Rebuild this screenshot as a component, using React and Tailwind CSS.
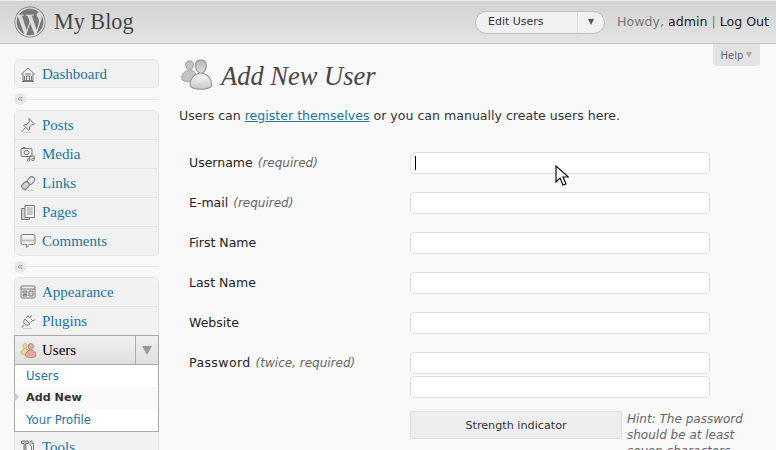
import { FaWordpress } from 'react-icons/fa';

const sans = 'font-["DejaVu_Sans",sans-serif]';
const serif = 'font-["Liberation_Serif",serif]';

function Person({ x, y, s, fill, stroke }) {
  return (
    <g transform={`translate(${x} ${y}) scale(${s})`} fill={fill} stroke={stroke} strokeWidth="1">
      <path d="M1 24c0-6 4-10 9-11-2-1-4-4-4-7 0-3 2-5 5-5s5 2 5 5c0 3-2 6-4 7 5 1 9 5 9 11 0 2-4 4-10 4S1 26 1 24z" />
    </g>
  );
}

function UsersIcon() {
  return (
    <svg width="36" height="34" viewBox="0 0 36 34" className="shrink-0">
      <defs>
        <linearGradient id="pg" x1="0" y1="0" x2="0" y2="1">
          <stop offset="0" stopColor="#b5b5b5" />
          <stop offset="0.6" stopColor="#efefef" />
          <stop offset="1" stopColor="#c8c8c8" />
        </linearGradient>
      </defs>
      <Person x={1} y={1} s={0.78} fill="#c4c4c4" stroke="#8a8a8a" />
      <Person x={9} y={0} s={1.08} fill="url(#pg)" stroke="#8f8f8f" />
    </svg>
  );
}

function UsersSmall() {
  return (
    <svg width="18" height="17" viewBox="0 0 36 34" className="shrink-0">
      <Person x={1} y={2} s={0.85} fill="#e8d98a" stroke="#8d7f4a" />
      <Person x={10} y={2} s={1.05} fill="#e3a6a6" stroke="#8e5d5d" />
    </svg>
  );
}

// hand-drawn menu glyphs, gray with a light fill like the old admin sprite
const glyphs = {
  house: (
    <>
      <path d="M1 8.500 8 2l7 6.500" />
      <path d="M3 7.500V14.500h10V7.500" fill="#e8e8e8" />
      <path d="M5 8h6M6.500 14.500V10h3v4.500M4.500 10v4M11.500 10v4M2 15.500h12" />
    </>
  ),
  pin: (
    <>
      <path d="m9 1.500 5.500 5.500-1.500 1-1-.5-2.500 2.500.2 2.300-1 1-5-5 1-1 2.300.2L9.500 4l-.5-1z" fill="#e8e8e8" />
      <path d="M5.500 10.500 1.500 15" />
      <path d="M3 15.500h8" stroke="#ccc" />
    </>
  ),
  media: (
    <>
      <rect x="1" y="2.500" width="11" height="8" rx="1" fill="#e8e8e8" />
      <circle cx="6.500" cy="6.500" r="2.200" />
      <path d="M3 2.500v-1h2v1" />
      <circle cx="8.500" cy="14" r="1.300" />
      <circle cx="13" cy="13.500" r="1.300" />
      <path d="M9.800 14V10h4.500v3.500" />
    </>
  ),
  link: (
    <>
      <path d="M7 9 4.500 11.500" strokeWidth="1" />
      <rect x="8" y="1.500" width="6" height="8" rx="3" transform="rotate(45 11 5.500)" fill="#e8e8e8" />
      <rect x="2.500" y="6.500" width="6" height="8" rx="3" transform="rotate(45 5.500 10.500)" fill="#d0d0d0" />
      <path d="M4 15.500h10" stroke="#ccc" />
    </>
  ),
  pages: (
    <>
      <path d="M1.500 4.500h8v11h-8z" fill="#cfcfcf" />
      <path d="M5 1.500h9.500v12H5z" fill="#f0f0f0" />
      <path d="M7 4h5.500M7 6h5.500M7 8h5.500M7 10h5.500" stroke="#999" />
    </>
  ),
  comment: (
    <>
      <path d="M2.500 1.500h11a1.500 1.500 0 0 1 1.500 1.500v7a1.500 1.500 0 0 1-1.500 1.500H9l-2.500 3v-3h-4A1.500 1.500 0 0 1 1 10V3a1.500 1.500 0 0 1 1.500-1.500z" fill="#f2f2f2" />
      <path d="M2 6.500h12v2H2z" fill="#bbb" stroke="none" />
    </>
  ),
  appearance: (
    <>
      <rect x="1" y="2" width="14" height="12" rx="1" fill="#f0f0f0" />
      <path d="M1 5h14" />
      <path d="M3 7h4v2H3zM3 10.500h4V12H3zM9 7h4v5H9z" fill="#d4d4d4" />
    </>
  ),
  plug: (
    <>
      <path d="m5 6 5 5c-1.500 1.500-4 1.500-5.500 0S3.500 7.500 5 6z" fill="#e8e8e8" />
      <path d="m8 3 2 2 1.500-3M11 6l2 2 2-1.500M4 12l-2.500 3" />
      <path d="M6 5 8.500 2.500M10.500 9.500 13 7" />
      <path d="M3 15.500h9" stroke="#ccc" />
    </>
  ),
  tools: (
    <>
      <path d="M1.500 2h7v2.500h-2.500v11h-2v-11h-2.500z" fill="#bbb" />
      <path d="M12 1.500v3h1.500v11h-2v-8c-1-.5-1.500-1.500-1.500-3 0-1.500.8-2.500 2-3z" fill="#e8e8e8" />
    </>
  ),
};

function Glyph({ name }) {
  return (
    <svg width="16" height="17" viewBox="0 0 16 17" fill="none" stroke="#7a7a7a" strokeWidth="1" className="mr-[6px] shrink-0">
      {glyphs[name]}
    </svg>
  );
}

function MenuRow({ icon, label, h = 'h-[29px]', last, extra = '' }) {
  return (
    <div className={`flex ${h} items-center bg-[#f1f1f1] pl-[5px] ${extra} ${last ? '' : 'border-b border-[#e3e3e3]'}`}>
      <Glyph name={icon} />
      <span className={`${serif} text-[15px] text-[#21759b]`}>{label}</span>
    </div>
  );
}

function Separator({ h }) {
  return (
    <div className={`flex ${h} items-center`}>
      <div className="flex h-[12px] w-[12px] shrink-0 items-center justify-center rounded-full bg-[#e6e6e6] text-[10px] leading-none text-[#999]">
        «
      </div>
      <div className="h-px flex-1 bg-[#e8e8e8]" />
    </div>
  );
}

function Sidebar() {
  return (
    <aside className="ml-[14px] mt-[15px] w-[145px] shrink-0">
      <div className="overflow-hidden rounded-[6px] border border-[#e3e3e3]">
        <MenuRow icon="house" label="Dashboard" h="h-[27px]" extra="pt-[1px]" last />
      </div>
      <Separator h="h-[22px]" />
      <div className="overflow-hidden rounded-[6px] border border-[#e3e3e3]">
        <MenuRow icon="pin" label="Posts" />
        <MenuRow icon="media" label="Media" />
        <MenuRow icon="link" label="Links" />
        <MenuRow icon="pages" label="Pages" />
        <MenuRow icon="comment" label="Comments" h="h-[28px]" last />
      </div>
      <Separator h="h-[21px]" />
      <div className="overflow-hidden rounded-t-[6px] border-x border-t border-[#e3e3e3]">
        <MenuRow icon="appearance" label="Appearance" />
        <MenuRow icon="plug" label="Plugins" h="h-[28px]" last />
      </div>
      <div className="border border-[#aaa]">
        <div className="flex h-[28px] items-center bg-gradient-to-b from-[#f0f0f0] to-[#dfdfdf] pl-[5px]">
          <UsersSmall />
          <span className={`${serif} ml-[4px] flex-1 text-[15px] text-black`}>Users</span>
          <div className="flex h-full w-[23px] items-center justify-center border-l border-[#aaa]">
            <div className="h-0 w-0 border-x-[5px] border-t-[9px] border-x-transparent border-t-[#999]" />
          </div>
        </div>
        <div className={`${sans} relative border-t border-[#aaa] bg-white text-[11.700px]`}>
          <div className="flex h-[22px] items-center pl-[11px] pt-[1px] text-[#21759b]">Users</div>
          <div className="flex h-[22px] items-center bg-[#f9f9f9] pl-[11px] pt-[1px] text-[11.200px] font-bold text-[#333]">Add New</div>
          <div className="flex h-[22px] items-center pl-[11px] pt-[1px] text-[#21759b]">Your Profile</div>
          <div className="absolute left-[-1px] top-[27px] h-0 w-0 border-y-[5px] border-l-[5px] border-y-transparent border-l-[#c8c8c8]" />
        </div>
      </div>
      <div className="border-x border-[#e3e3e3]">
        <MenuRow icon="tools" label="Tools" extra="pt-[2px]" />
      </div>
    </aside>
  );
}

function Label({ text, note, wide }) {
  return (
    <div className="w-[231px] shrink-0 pl-[10px] pt-[3px] text-[12.500px] leading-[16px] text-[#222]">
      <span className={wide ? 'tracking-[0.4px]' : ''}>{text}</span>
      {note && <em className="ml-[5px] text-[12px] text-[#666]">{note}</em>}
    </div>
  );
}

function Field({ label, note, wide, h = 'h-[40px]' }) {
  return (
    <div className={`flex ${h}`}>
      <Label text={label} note={note} wide={wide} />
      <div className="h-[22px] w-[300px] rounded-[4px] border border-[#dfdfdf] bg-white" />
    </div>
  );
}

export default function App() {
  return (
    <div className={`${sans} h-[450px] w-[776px] overflow-hidden bg-[#f9f9f9]`}>
      <header className="flex h-[44px] items-center border-b border-[#c6c6c6] border-t border-t-[#eee] bg-gradient-to-b from-[#d2d2d2] to-[#e4e4e4] pl-[14px] pr-[7px]">
        <FaWordpress size={32} className="text-[#777]" />
        <span className={`${serif} ml-[8px] text-[22.200px] leading-none text-[#464646]`}>My Blog</span>
        <div className="ml-auto flex h-[23px] w-[130px] items-center rounded-full border border-[#c0c0c0] bg-[#f1f1f1] text-[11px] text-[#333]">
          <span className="flex-1 pl-[12px]">Edit Users</span>
          <div className="flex h-full w-[27px] items-center justify-center border-l border-[#ddd]">
            <div className="h-0 w-0 border-x-[3.500px] border-t-[6px] border-x-transparent border-t-[#555]" />
          </div>
        </div>
        <div className="ml-[12px] text-[12.600px] text-[#777]">
          Howdy, <span className="text-[#222]">admin</span> | <span className="text-[#222]">Log Out</span>
        </div>
      </header>
      <div className="flex">
        <Sidebar />
        <main className="relative ml-[20px] flex-1">
          <div className="absolute right-[16px] top-0 flex h-[22px] w-[47px] items-center justify-center gap-[3px] rounded-b-[4px] bg-[#e3e3e3] text-[10px] text-[#666]">
            Help
            <div className="h-0 w-0 border-x-[3px] border-t-[6px] border-x-transparent border-t-[#aaa]" />
          </div>
          <div className="ml-[1px] mt-[15px] flex items-center">
            <UsersIcon />
            <h1 className={`${serif} ml-[5px] text-[26.500px] italic leading-[34px] text-[#464646]`}>Add New User</h1>
          </div>
          <p className="mt-[15px] text-[12.570px] leading-[16px] text-[#333]">
            Users can <a className="text-[#21759b] underline">register themselves</a> or you can manually create users here.
          </p>
          <div className="mt-[28px]">
            <div className="flex h-[40px]">
              <Label text="Username" note="(required)" />
              <div className="flex h-[22px] w-[300px] items-center rounded-[4px] border border-[#dfdfdf] bg-white pl-[4px]">
                <div className="h-[14px] w-px bg-black" />
              </div>
            </div>
            <Field label="E-mail" note="(required)" />
            <Field label="First Name" />
            <Field label="Last Name" />
            <Field label="Website" />
            <Field label="Password" note="(twice, required)" wide h="h-[24px]" />
            <div className="flex h-[35px]">
              <div className="w-[231px] shrink-0" />
              <div className="h-[22px] w-[300px] rounded-[4px] border border-[#dfdfdf] bg-white" />
            </div>
            <div className="flex">
              <div className="w-[231px] shrink-0" />
              <div className="flex h-[28px] w-[212px] shrink-0 items-center justify-center border border-[#dfdfdf] bg-[#eee] pt-[2px] text-[11.200px] text-[#333]">
                Strength indicator
              </div>
              <p className="ml-[5px] w-[130px] text-[12px] italic leading-[16px] text-[#666]">
                Hint: The password should be at least seven characters long.
              </p>
            </div>
          </div>
          <svg width="14" height="22" viewBox="0 0 14 22" className="absolute left-[376px] top-[121px]">
            <path d="M1 1v16l4-4 3 7 3-1-3-7h5.500z" fill="#fff" stroke="#111" strokeWidth="1.200" />
          </svg>
        </main>
      </div>
    </div>
  );
}
